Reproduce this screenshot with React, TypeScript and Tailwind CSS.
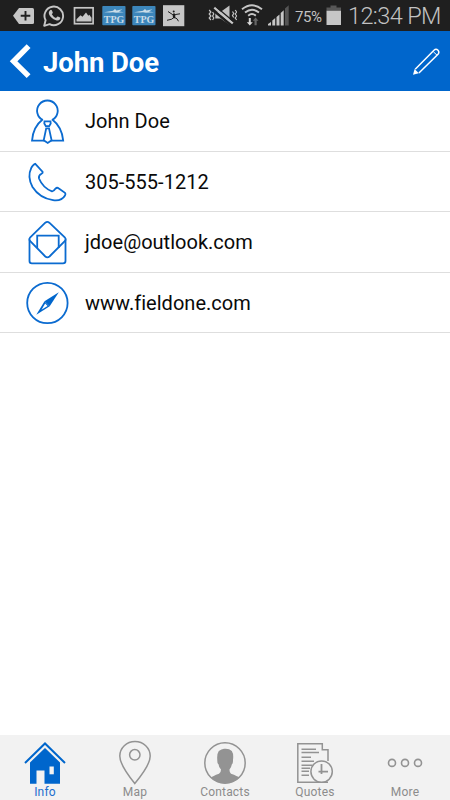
import type { ReactNode } from "react";

type IconProps = { className?: string };

function TagIcon() {
  return (
    <svg className="h-[31px] w-[22px]" viewBox="13 0 22 31">
      <path d="M13 15.800 19 8h13.500q1.500 0 1.500 1.500v13q0 1.500-1.500 1.500H19z" fill="#c6c6c6" />
      <path d="M25.500 11v9.500M20.700 15.700h9.600" stroke="#1f1f1f" strokeWidth="1.900" />
    </svg>
  );
}

function WhatsAppIcon() {
  return (
    <svg className="ml-2 h-[31px] w-[22px]" viewBox="43 0 22 31">
      <path
        d="M44.200 25.800 45.600 20.300A9.300 9.300 0 1 1 49.600 24.200z"
        fill="none"
        stroke="#c6c6c6"
        strokeWidth="1.900"
        strokeLinejoin="round"
      />
      <path
        d="M50 10.300q1-.900 1.800-.100l1 2.400q.100.500-1 1.700 1.500 2.800 4.200 3.700l1.400-1.500q.4-.3 2.700 1.100.600.400-.1 1.600-1.400 1.900-4 1.100-5.200-1.600-7.100-6.200-.6-2.400 1.100-3.800z"
        fill="#c6c6c6"
      />
    </svg>
  );
}

function PictureIcon() {
  return (
    <svg className="ml-2 h-[31px] w-[22px]" viewBox="73 0 22 31">
      <rect x="74.500" y="7.800" width="18.600" height="15.900" fill="none" stroke="#c6c6c6" strokeWidth="1.700" />
      <path d="M76.500 21.500v-2.300l4-4 2 1.500 3.500-4.200 2.300 3.200 1-.900 2.200 3v3.700z" fill="#c6c6c6" />
    </svg>
  );
}

function TpgIcon({ className }: IconProps) {
  return (
    <svg className={`h-[31px] w-6 ${className}`} viewBox="0 0 24 31">
      <rect x=".3" y="6" width="23.200" height="19.200" rx=".8" fill="#3c86bb" />
      <path d="M2 12.200l9-1.500 2-1.700 1.500 1.400 6-1.200-3.500 2.300 5 .700-8 .600-3-.500-3 .300z" fill="#c9dce8" />
      <text
        x="12"
        y="23"
        textAnchor="middle"
        textLength="20.500"
        lengthAdjust="spacingAndGlyphs"
        fontSize="10.500"
        fontWeight="700"
        fill="#c9dce8"
        fontFamily="Liberation Serif, serif"
      >
        TPG
      </text>
    </svg>
  );
}

function RunnerIcon() {
  return (
    <svg className="ml-[7px] h-[31px] w-[22px]" viewBox="163 0 22 31">
      <rect x="163" y="5.200" width="21.300" height="21" fill="#c6c6c6" />
      <circle cx="173.700" cy="11.500" r="1" fill="#1d1d1d" />
      <path
        d="M168 11.500l4.500 3h3l4.500-.700M174 13l.2 4.500M174 17.200l-2.300 2-4.700 1.100M174.300 17.300l2.700 1.500 1.500 2.500"
        fill="none"
        stroke="#1d1d1d"
        strokeWidth="1"
      />
      <path d="M172.500 14h3l-.4 4.300h-2z" fill="#1d1d1d" />
    </svg>
  );
}

function MuteIcon() {
  return (
    <svg className="ml-auto h-[31px] w-[29px]" viewBox="208 0 29 31">
      <path d="M215.300 12h5.200l9-6.500v19.300l-9-6.300h-5.200z" fill="#c0c0c0" />
      <path d="M213.300 10.200 231.300 25.200" stroke="#1f1f1f" strokeWidth="2.600" />
      <path d="M214.300 7.700 232.800 23.300" stroke="#c6c6c6" strokeWidth="2.200" />
      <path d="M216 6.700 233.500 21.500" stroke="#1f1f1f" strokeWidth="1.200" />
      <path
        d="M209.200 10l1.700 2-1.700 2 1.700 2-1.700 2 1.700 2M212.600 12l1.200 2-1.200 2 1.200 2-1.200 2M232.500 11.500l1.200 2-1.200 2 1.200 2M235.200 10l1.500 2-1.500 2 1.500 2-1.500 2 1.500 2"
        fill="none"
        stroke="#c6c6c6"
        strokeWidth="1.200"
      />
    </svg>
  );
}

function WifiIcon() {
  return (
    <svg className="ml-1 h-[31px] w-[22px]" viewBox="241 0 22 31">
      <path
        d="M242 9.300q10-8 20 0M245 12.600q7-5.800 14 0M248.200 15.700q3.800-3.200 7.600 0"
        fill="none"
        stroke="#c6c6c6"
        strokeWidth="1.900"
      />
      <path d="M248.800 18h2v4.300h2l-3 3.300-3-3.300h2z" fill="#d8d8d8" />
      <path d="M255.600 17.500l2.900 3.300h-1.800v4.500h-2.200v-4.500h-1.800z" fill="#666" />
    </svg>
  );
}

function SignalIcon() {
  return (
    <svg className="ml-[5px] h-[31px] w-[22px]" viewBox="268 0 22 31">
      <path
        d="M268 25.500v-1.500l3-2v3.500zM272.300 25.500v-5l2.900-2.500v7.500zM276.500 25.500v-8.500l3-2.500v11zM280.700 25.500v-12.500l3-2.700v15.200z"
        fill="#c6c6c6"
      />
      <path d="M285 25.500V8.500l3.700-3.300v20.300z" fill="#555" />
    </svg>
  );
}

function BatteryIcon() {
  return (
    <svg className="ml-1 h-[31px] w-4" viewBox="326 0 16 31">
      <path d="M326.500 11V7.500h4v-2h6v2h4.500V11z" fill="#575757" />
      <rect x="326.500" y="10.800" width="14.500" height="14.200" fill="#c6c6c6" />
    </svg>
  );
}

function StatusBar() {
  return (
    <div className="flex h-[31px] items-center bg-[#1f1f1f] pl-[13px] text-[#c2c2c2]">
      <TagIcon />
      <WhatsAppIcon />
      <PictureIcon />
      <TpgIcon className="ml-[7px]" />
      <TpgIcon className="ml-1.5" />
      <RunnerIcon />
      <MuteIcon />
      <WifiIcon />
      <SignalIcon />
      <span className="ml-[5px] w-[27px] whitespace-nowrap pt-[3px] text-[15px] tracking-[-0.4px]">75%</span>
      <BatteryIcon />
      <span className="ml-1.5 w-[102px] whitespace-nowrap pt-px text-[23.500px] font-light leading-[31px] tracking-[-0.600px]">
        12:34 PM
      </span>
    </div>
  );
}

function Header() {
  return (
    <header className="flex h-[60px] items-center bg-[#0066cc] text-white">
      <svg className="h-[60px] w-[43px]" viewBox="0 31 43 60">
        <path d="M28.600 46.200 13.600 61.300 28.600 76.200" fill="none" stroke="currentColor" strokeWidth="5.400" />
      </svg>
      <h1 className="pt-[3px] text-[27.500px] font-bold tracking-[-0.1px]">John Doe</h1>
      <svg className="ml-auto mr-2.5 h-[60px] w-[28px]" viewBox="412 31 28 60">
        <path
          d="M415.200 69.200 434 50.200Q436 48.400 438 50.200 439.700 52.200 438 54.200L418.900 73"
          fill="none"
          stroke="currentColor"
          strokeWidth="1.500"
        />
        <path d="M433.300 51.700 437 55.200" stroke="currentColor" strokeWidth="1" />
        <path d="M413 74.800l1.600-5.700 4.200 4.100z" fill="currentColor" />
      </svg>
    </header>
  );
}

function PersonIcon() {
  return (
    <g>
      <path d="M42.800 120A10.300 10.300 0 1 1 52 120M42.800 119.300Q33 127 32 140.700H44.300M52 119.300Q62 127 63.200 140.700H51" />
      <path d="M44.500 121.300h6l.2 2.200-1.500 2.700h-3.400l-1.500-2.700zM46.200 128.300h2.800l2.600 12-3.900 2.700-4-2.700z" />
    </g>
  );
}

function PhoneIcon() {
  return (
    <path d="M35.300 163.800 42.700 172Q43 172.800 41.500 173.800 38.300 175.500 39 178.500 43 188 52 191.300 53.700 191.500 55.300 188.800 57 187 58.500 188.200L65 192.800Q66 194 65 195.500 61.500 201.500 53 200.200 39.500 198 32.500 187 27 176.500 31.300 167.800 33.500 164 35.300 163.800z" />
  );
}

function MailIcon() {
  return (
    <g>
      <path d="M29.500 239.500V261Q29.500 263.300 31.800 263.300H63Q65.500 263.300 65.500 261V239.500" />
      <path d="M30 237.700 45.300 222.700Q47.300 221 49.300 222.700L65 237.700Q66.300 239.300 65 241L49.500 256.500Q47.300 258.300 45.300 256.500L30 241Q28.700 239.300 30 237.700z" />
      <path d="M37.200 248V235.700H58.700V248" />
    </g>
  );
}

function CompassIcon() {
  return (
    <g>
      <circle cx="47.400" cy="303" r="20.200" />
      <path d="M58.800 292.300 44.500 301.200 49.700 306.300z" fill="#0066cc" stroke="none" />
      <path d="M44.500 301.200 36.300 314.700 49.700 306.300z" fill="#0066cc" stroke="none" />
      <path d="M45.200 303.600 47.600 306 41.500 309.700z" fill="#fff" stroke="none" />
    </g>
  );
}

type InfoRowProps = {
  icon: ReactNode;
  viewBox: string;
  label: string;
};

function InfoRow({ icon, viewBox, label }: InfoRowProps) {
  return (
    <li className="flex items-start border-b border-[#dedede] pl-[25px] odd:h-[61px] even:h-[60px]">
      <svg className="-mb-px h-[60px] w-[45px] shrink-0" viewBox={viewBox} fill="none" stroke="#0b6bd0" strokeWidth="1.800">
        {icon}
      </svg>
      <span className="ml-[15px] text-[20px] leading-[60px] text-[#0a0a0a] even:tracking-[0.02px]">{label}</span>
    </li>
  );
}

function HouseIcon() {
  return (
    <g>
      <path d="M25 763 45 743.500 65 763" fill="none" stroke="#0066cc" strokeWidth="2" />
      <path d="M30 762.500 45 748 60 762.500V783.700H44.500V770.500H36.500V783.700H30z" fill="#0066cc" />
      <rect x="49.500" y="766.500" width="4.300" height="7.800" fill="#f2f2f2" />
    </g>
  );
}

function PinIcon() {
  return (
    <g fill="none" stroke="#939393" strokeWidth="1.500">
      <path d="M134.800 783.500Q119.800 765 119.800 756A15.100 14.500 0 0 1 150.200 756Q150.200 765 134.800 783.500z" />
      <circle cx="134.800" cy="754.800" r="5.200" />
    </g>
  );
}

function ContactIcon() {
  return (
    <g>
      <circle cx="225" cy="763" r="20.200" fill="none" stroke="#939393" strokeWidth="1.500" />
      <path
        d="M211 777.700Q212.500 776 219 773.700 221 772.700 221 769.500 218.800 767.500 218.500 764.300 217.200 763.500 217.300 760.200 216.700 754 218.800 751 221.500 749.300 224 748.800 229 748.200 231.800 751 233.800 754 233 760 233.200 763.500 231.800 764.500 231.300 767.500 229.500 769.500 229.300 772.500 231 773.700 237.500 776 239.500 777.700 233.500 783.300 225 783.300 216.500 783.300 211 777.700z"
        fill="#939393"
      />
    </g>
  );
}

function QuotesIcon() {
  return (
    <g fill="none" stroke="#939393" strokeWidth="1.500">
      <path d="M328 782.300H297.800V743.800H322.300V749.800H328V761M322.300 749.800V744" />
      <path d="M301.500 749.300H316M301.500 752.400H319M301.500 757.300H311M301.500 761.300H314M301.500 765.300H312.500M301.500 768.300H310M301.500 771.300H309M301.500 775.200H309" />
      <circle cx="321.600" cy="771.600" r="10.700" fill="#f2f2f2" />
      <path d="M321.500 764V774M318.500 771.600H328" strokeWidth="1.800" />
    </g>
  );
}

function MoreIcon() {
  return (
    <g fill="none" stroke="#939393" strokeWidth="1.600">
      <circle cx="392" cy="762.900" r="3.500" />
      <circle cx="405" cy="762.900" r="3.500" />
      <circle cx="418" cy="762.900" r="3.500" />
    </g>
  );
}

const CONTACT_ROWS: InfoRowProps[] = [
  { label: "John Doe", viewBox: "25 91 45 60", icon: <PersonIcon /> },
  { label: "305-555-1212", viewBox: "25 152 45 60", icon: <PhoneIcon /> },
  { label: "jdoe@outlook.com", viewBox: "25 212 45 60", icon: <MailIcon /> },
  { label: "www.fieldone.com", viewBox: "25 273 45 60", icon: <CompassIcon /> },
];

const TABS = [
  { label: "Info", active: true, viewBox: "22 735 46 50", icon: <HouseIcon /> },
  { label: "Map", active: false, viewBox: "112 735 46 50", icon: <PinIcon /> },
  { label: "Contacts", active: false, viewBox: "202 735 46 50", icon: <ContactIcon /> },
  { label: "Quotes", active: false, viewBox: "292 735 46 50", icon: <QuotesIcon /> },
  { label: "More", active: false, viewBox: "382 735 46 50", icon: <MoreIcon /> },
];

export default function App() {
  return (
    <div className="flex h-[800px] w-[450px] flex-col overflow-hidden bg-white font-[Roboto,sans-serif]">
      <StatusBar />
      <Header />

      <ul className="flex-1">
        {CONTACT_ROWS.map((row) => (
          <InfoRow key={row.label} {...row} />
        ))}
      </ul>

      <nav className="grid h-[65px] grid-cols-5 bg-[#f2f2f2]">
        {TABS.map((tab) => (
          <button key={tab.label} type="button" className="flex flex-col items-center">
            <svg className="h-[50px] w-[46px]" viewBox={tab.viewBox}>
              {tab.icon}
            </svg>
            <span
              className={
                tab.active
                  ? "text-[12px] leading-[14px] tracking-[0.2px] text-[#1b6fce]"
                  : "text-[12px] leading-[14px] tracking-[0.2px] text-[#8c8c8c]"
              }
            >
              {tab.label}
            </span>
          </button>
        ))}
      </nav>
    </div>
  );
}
